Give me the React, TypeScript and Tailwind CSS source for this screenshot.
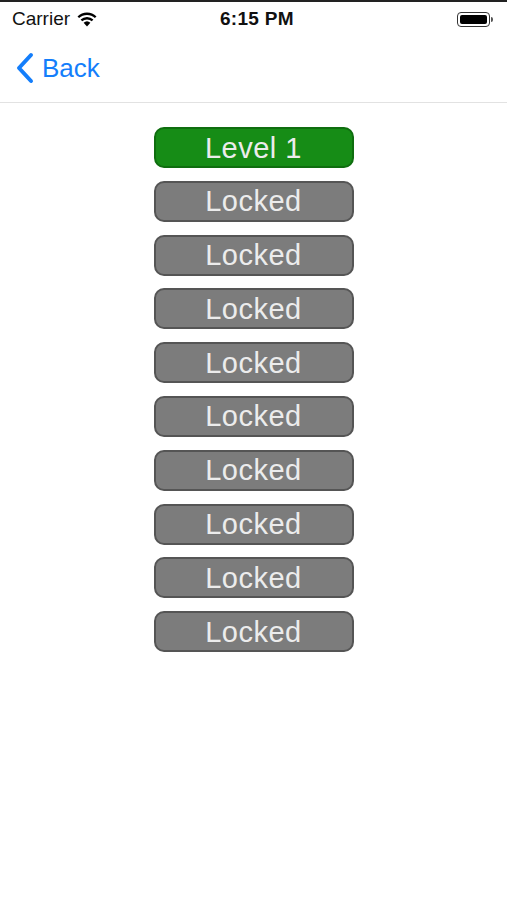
import React from "react";

const levels = ["Level 1", ...Array(9).fill("Locked")];

export default function App() {
  return (
    <div className="min-h-[900px] bg-white font-['Liberation_Sans',Arial,sans-serif]">
      {/* Status bar */}
      <div className="border-t-2 border-[#222]">
        <div className="h-[34px] flex items-center justify-between px-3 relative">
          <div className="flex items-center gap-[6px] text-[19px] text-[#111]">
            <span>Carrier</span>
            <svg width="22" height="16" viewBox="0 0 22 16">
              <path d="M11 15.5 L7.6 11.8 A5 5 0 0 1 14.4 11.8 Z" fill="#000" />
              <path d="M4.6 8.6 A9.3 9.3 0 0 1 17.4 8.6 L15.8 10.3 A7 7 0 0 0 6.2 10.3 Z" fill="#000" />
              <path d="M1.5 5.4 A13.8 13.8 0 0 1 20.5 5.4 L18.9 7.1 A11.5 11.5 0 0 0 3.1 7.1 Z" fill="#000" />
            </svg>
          </div>
          <span className="absolute left-[220px] text-[19px] font-semibold text-[#111] tracking-[0.3px]">6:15 PM</span>
          <div className="flex items-center mr-[2px]">
            <div className="w-[33px] h-[15px] rounded-[4px] border border-[#333] p-[2px]">
              <div className="w-full h-full bg-black rounded-[2px]" />
            </div>
            <div className="w-[2px] h-[5px] bg-[#555] rounded-r-sm ml-[1px]" />
          </div>
        </div>
      </div>

      {/* Nav bar */}
      <div className="h-[67px] flex items-center pl-[14px] border-b border-[#e2e2e2] pb-[2px]">
        <svg width="22" height="32" viewBox="0 0 22 32" className="mr-[6px]">
          <path d="M17 3 L5 16 L17 29" stroke="#147efb" strokeWidth="4" fill="none" strokeLinecap="round" strokeLinejoin="round" />
        </svg>
        <span className="text-[26px] text-[#147efb]">Back</span>
      </div>

      {/* Levels */}
      <div className="flex flex-col items-center gap-[12.8px] pt-[24px]">
        {levels.map((label, i) => (
          <button
            key={i}
            className={`w-[200px] h-[41px] rounded-[10px] border-2 text-[29px] leading-none tracking-[0.5px] text-[#ececec] pt-[1px] ${
              i === 0
                ? "bg-[#168c16] border-[#0f6e0f]"
                : "bg-[#7c7c7c] border-[#555]"
            }`}
          >
            {label}
          </button>
        ))}
      </div>
    </div>
  );
}
